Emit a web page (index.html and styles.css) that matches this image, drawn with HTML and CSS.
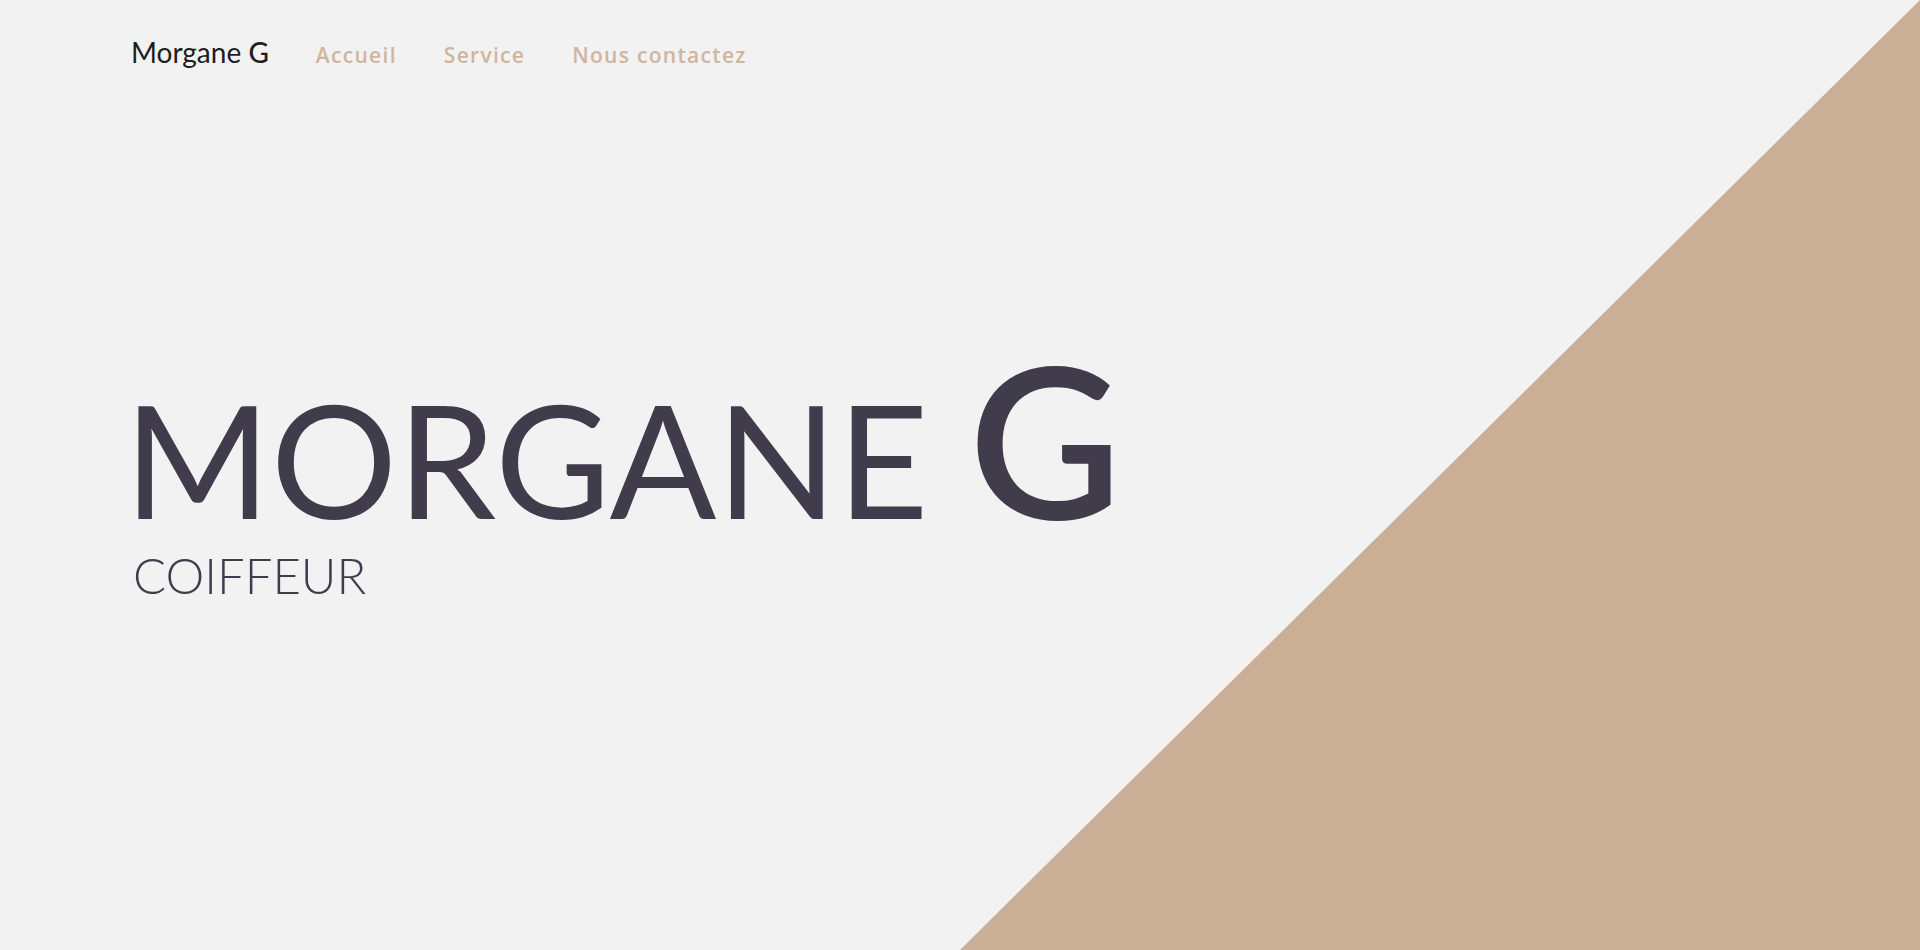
FILE: index.html
```html
<!DOCTYPE html>
<html lang="fr">
<head>
<meta charset="utf-8">
<title>Morgane G</title>
<link rel="stylesheet" href="styles.css">
</head>
<body>
<div class="triangle"></div>
<header class="nav">
  <a class="brand">Morgane <b>G</b></a>
  <a class="link">Accueil</a>
  <a class="link">Service</a>
  <a class="link">Nous contactez</a>
</header>
<main class="hero">
  <h1 class="title">MORGANE <span class="big-g">G</span></h1>
  <p class="subtitle">COIFFEUR</p>
</main>
</body>
</html>
```
FILE: styles.css
```css
html, body {
  margin: 0;
  padding: 0;
}
body {
  width: 1920px;
  height: 950px;
  overflow: hidden;
  background: #f2f2f2;
  font-family: Lato, "Liberation Sans", sans-serif;
  position: relative;
}
.triangle {
  position: absolute;
  inset: 0;
  background: #caae96;
  clip-path: polygon(100% 0, 100% 100%, 50% 100%);
}
.nav {
  position: relative;
  display: flex;
  align-items: baseline;
  gap: 47px;
  padding: 35px 0 0 131px;
}
.brand {
  font-size: 28px;
  color: #1d1d22;
  font-weight: 400;
}
.brand b {
  font-weight: 500;
}
.link {
  font-family: "Open Sans", sans-serif;
  font-size: 21px;
  font-weight: 600;
  letter-spacing: 1.3px;
  color: #cfb59f;
}
.hero {
  position: relative;
  padding: 264px 0 0 124px;
}
.title {
  margin: 0;
  font-size: 158px;
  font-weight: 400;
  line-height: 1;
  color: #413c4b;
  display: flex;
  align-items: baseline;
  white-space: pre;
}
.big-g {
  font-size: 210px;
  font-weight: 600;
}
.subtitle {
  margin: 8px 0 0 9px;
  font-size: 49px;
  font-weight: 300;
  color: #413c4b;
  line-height: 1;
}
```
